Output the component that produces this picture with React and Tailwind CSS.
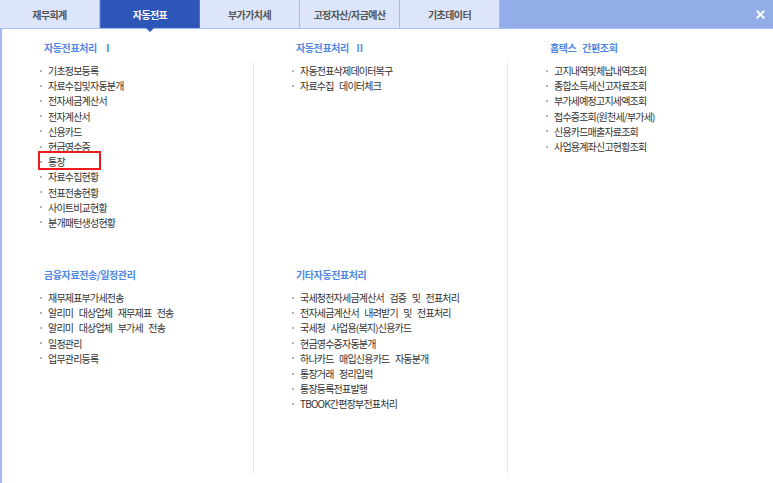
import { X } from "lucide-react";

const tabs = ["재무회계", "자동전표", "부가가치세", "고정자산/자금예산", "기초데이터"];

const col1a = [
  "기초정보등록",
  "자료수집및자동분개",
  "전자세금계산서",
  "전자계산서",
  "신용카드",
  "현금영수증",
  "통장",
  "자료수집현황",
  "전표전송현황",
  "사이트비교현황",
  "분개패턴생성현황",
];
const col1b = [
  "재무제표부가세전송",
  "알리미 대상업체 재무제표 전송",
  "알리미 대상업체 부가세 전송",
  "일정관리",
  "업무관리등록",
];
const col2a = ["자동전표삭제데이터복구", "자료수집 데이터체크"];
const col2b = [
  "국세청전자세금계산서 검증 및 전표처리",
  "전자세금계산서 내려받기 및 전표처리",
  "국세청 사업용(복지)신용카드",
  "현금영수증자동분개",
  "하나카드 매입신용카드 자동분개",
  "통장거래 정리입력",
  "통장등록전표발행",
  "TBOOK간편장부전표처리",
];
const col3a = [
  "고지내역및체납내역조회",
  "종합소득세신고자료조회",
  "부가세예정고지세액조회",
  "접수증조회(원천세/부가세)",
  "신용카드매출자료조회",
  "사업용계좌신고현황조회",
];

function Heading({ children }) {
  return (
    <div className="h-[15px] leading-[15px] pl-[42px] mb-[8px] text-[10px] font-bold text-[#4f88e3] tracking-[-0.4px] [word-spacing:4px]">
      {children}
    </div>
  );
}

function List({ items, boxed }) {
  return (
    <ul className="pl-[38px]">
      {items.map((t) => (
        <li key={t} className="flex items-center h-[15.2px] text-[10px] text-[#333] tracking-[-0.8px] [word-spacing:4px] whitespace-pre">
          <span className="w-[2px] h-[2px] bg-[#b5b5b5] mr-[6px] shrink-0"></span>
          {boxed === t ? (
            <span className="relative">
              {t}
              <span className="absolute left-[-10px] top-[-3px] w-[63px] h-[19px] border-2 border-[#ee1c1c]"></span>
            </span>
          ) : (
            t
          )}
        </li>
      ))}
    </ul>
  );
}

export default function App() {
  return (
    <div
      className="w-[773px] h-[483px] bg-white overflow-hidden"
      style={{ fontFamily: '"Noto Sans CJK KR", "Noto Sans", sans-serif' }}
    >
      <div className="flex h-[29px] bg-[#93ade8] border-b border-[#a9bdf0]">
        {tabs.map((t, i) =>
          i === 1 ? (
            <div
              key={t}
              className="relative w-[100px] flex items-center justify-center bg-[#2c56b8] border-x border-[#4a6fd2] text-white text-[10px] font-bold tracking-[-0.6px]"
            >
              {t}
              <span className="absolute left-1/2 -translate-x-1/2 top-full border-x-[4px] border-x-transparent border-t-[4px] border-t-[#2c56b8]"></span>
            </div>
          ) : (
            <div
              key={t}
              className="w-[100px] flex items-center justify-center bg-[#dce5f9] border-r border-[#a7bcee] text-[#555] text-[10px] font-bold tracking-[-0.6px]"
            >
              {t}
            </div>
          )
        )}
        <div className="flex-1 flex items-center justify-end pr-[6px]">
          <X size={13} strokeWidth={3.5} className="text-white" />
        </div>
      </div>
      <div className="h-[454px] border-l-2 border-[#a3b8f0] pt-[11px] grid grid-cols-[252px_254px_1fr]">
        <div>
          <Heading>자동전표처리 Ⅰ</Heading>
          <div className="h-[204px]">
            <List items={col1a} boxed="통장" />
          </div>
          <Heading>금융자료전송/일정관리</Heading>
          <List items={col1b} />
        </div>
        <div>
          <Heading>자동전표처리 Ⅱ</Heading>
          <div className="h-[410px] border-l border-[#e3e3e3] ml-[-1px]">
            <div className="h-[204px]">
              <List items={col2a} />
            </div>
            <Heading>기타자동전표처리</Heading>
            <List items={col2b} />
          </div>
        </div>
        <div>
          <Heading>홈텍스 간편조회</Heading>
          <div className="h-[410px] border-l border-[#e3e3e3] ml-[-1px]">
            <List items={col3a} />
          </div>
        </div>
      </div>
    </div>
  );
}
